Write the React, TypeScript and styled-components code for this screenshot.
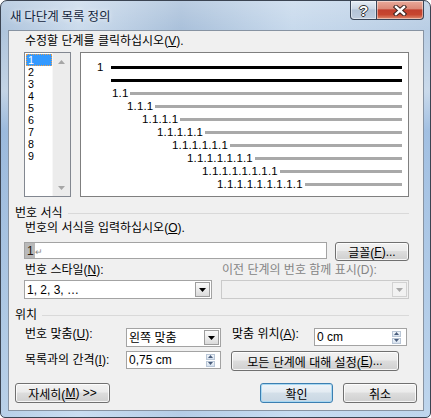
import React from 'react';
import styled, { createGlobalStyle } from 'styled-components';

const UI_FONT = `"Liberation Sans", "Noto Sans CJK KR", sans-serif`;

const GlobalStyle = createGlobalStyle`
  html, body {
    margin: 0;
    padding: 0;
    background: #fff;
  }
  body {
    font-family: ${UI_FONT};
    font-size: 12px;
    color: #000;
  }
`;

const Window = styled.div`
  box-sizing: border-box;
  width: 431px;
  height: 418px;
  border: 1px solid #3b4452;
  border-radius: 7px 7px 5px 5px;
  padding: 0 6px 6px 7px;
  display: flex;
  flex-direction: column;
  overflow: hidden;
  background:
    linear-gradient(180deg, rgba(255, 255, 255, 0.2) 0%, rgba(255, 255, 255, 0) 30px, rgba(255, 255, 255, 0.25) 90px, rgba(110, 160, 220, 0.3) 130px, rgba(200, 226, 250, 0.4) 100%),
    linear-gradient(90deg, #aec4dc 0%, #cbdbec 18%, #a9c0da 42%, #c7d9ec 68%, #b8cde4 100%);
`;

const TitleBar = styled.div`
  height: 29px;
  flex-shrink: 0;
  display: flex;
  align-items: center;
`;

const Title = styled.div`
  padding-left: 2px;
  font-family: "Noto Sans CJK KR", sans-serif;
  font-size: 12.5px;
  color: #14263d;
  text-shadow: 0 0 5px rgba(255, 255, 255, 0.9);
`;

const CaptionButtons = styled.div`
  margin-left: auto;
  align-self: flex-start;
  display: flex;
`;

const CaptionButton = styled.div<{ $close?: boolean }>`
  box-sizing: border-box;
  width: ${(p) => (p.$close ? 47 : 27)}px;
  height: 19px;
  border: 1px solid #3a4658;
  border-top: none;
  border-left-width: ${(p) => (p.$close ? 0 : 1)}px;
  border-radius: ${(p) => (p.$close ? '0 0 4px 0' : '0 0 0 4px')};
  background: ${(p) =>
    p.$close
      ? 'linear-gradient(#e9aa9a 0%, #dc8a78 42%, #c2402e 50%, #c7462f 75%, #df8a6e 100%)'
      : 'linear-gradient(#e6edf5 0%, #cbd7e5 42%, #b3c3d7 50%, #bfcddf 100%)'};
  box-shadow: inset 0 0 0 1px rgba(255, 255, 255, 0.45);
  display: flex;
  align-items: center;
  justify-content: center;
`;

const HelpGlyph = styled.span`
  font-family: "Liberation Sans", sans-serif;
  font-weight: 700;
  font-size: 15px;
  line-height: 15px;
  color: #fff;
  text-shadow: 1px 0 0 #333, -1px 0 0 #333, 0 1px 0 #333, 0 -1px 0 #333;
`;

const Client = styled.div`
  box-sizing: border-box;
  height: 381px;
  flex-shrink: 0;
  border: 1px solid #8793a2;
  background: #f0f0f0;
  padding: 3px 14px 0 15px;
  display: flex;
  flex-direction: column;
`;

const Label = styled.div<{ $disabled?: boolean; $dy?: number }>`
  height: 14px;
  line-height: 14px;
  padding-left: 1px;
  margin-top: ${(p) => p.$dy ?? 0}px;
  white-space: nowrap;
  color: ${(p) => (p.$disabled ? '#858585' : '#000')};
`;

const GroupHeader = styled.div`
  display: flex;
  align-items: center;
  height: 14px;
  line-height: 14px;
  margin: 9px 0 0 -9px;
  white-space: nowrap;

  &::after {
    content: '';
    flex: 1;
    height: 1px;
    margin-left: 5px;
    background: #d9d9d9;
  }
`;

const LevelRow = styled.div`
  display: flex;
  gap: 9px;
  height: 145px;
  margin-top: 4px;
`;

const LevelList = styled.div`
  box-sizing: border-box;
  width: 47px;
  border: 1px solid #828790;
  background: #fff;
  display: flex;
`;

const LevelItems = styled.div`
  flex: 1;
  padding: 1px 0 0 1px;
`;

const LevelItem = styled.div<{ $selected?: boolean }>`
  height: 12px;
  line-height: 12px;
  padding-left: 2px;
  font-family: "Liberation Sans", sans-serif;
  font-size: 10.7px;
  color: ${(p) => (p.$selected ? '#fff' : '#000')};
  background: ${(p) => (p.$selected ? '#3399ff' : 'transparent')};
  outline: ${(p) => (p.$selected ? '1px dotted #e8a050' : 'none')};
  outline-offset: -1px;
`;

const ScrollBar = styled.div`
  width: 17px;
  background: #ececec;
  border-left: 1px solid #f7f7f7;
  display: flex;
  flex-direction: column;
  justify-content: space-between;
`;

const ScrollArrow = styled.div`
  height: 17px;
  display: flex;
  align-items: center;
  justify-content: center;
`;

const Preview = styled.div`
  box-sizing: border-box;
  flex: 1;
  border: 1px solid #7f7f7f;
  background: #fff;
  padding: 8px 6px 0 0;
`;

const PreviewLine = styled.div<{ $indent: number }>`
  display: flex;
  align-items: center;
  height: 13px;
  padding-left: ${(p) => p.$indent}px;
`;

const PreviewNumber = styled.span<{ $w?: number }>`
  width: ${(p) => (p.$w ? `${p.$w}px` : 'auto')};
  margin-right: ${(p) => (p.$w ? 0 : 2)}px;
  font-family: "Liberation Sans", sans-serif;
  font-size: 11.5px;
  line-height: 13px;
  letter-spacing: 0.15px;
  white-space: nowrap;
`;

const Bar = styled.div<{ $strong?: boolean }>`
  flex: 1;
  height: 3px;
  background: ${(p) => (p.$strong ? '#000' : '#a9a9a9')};
`;

const FormatRow = styled.div`
  display: flex;
  align-items: flex-start;
  gap: 8px;
  margin-top: 7px;
  height: 19px;
`;

const TextBox = styled.div<{ $w?: number; $h?: number; $disabled?: boolean }>`
  box-sizing: border-box;
  flex: ${(p) => (p.$w ? 'none' : 1)};
  width: ${(p) => (p.$w ? `${p.$w}px` : 'auto')};
  height: ${(p) => p.$h ?? 18}px;
  border: 1px solid ${(p) => (p.$disabled ? '#cacaca' : '#a3a3a3')};
  background: ${(p) => (p.$disabled ? '#f0f0f0' : '#fff')};
  display: flex;
  align-items: center;
  padding-left: 2px;
  white-space: nowrap;
`;

const FieldText = styled.span`
  flex: 1;
  line-height: 14px;
`;

const FieldMark = styled.span`
  align-self: stretch;
  margin-left: -2px;
  padding: 0 1px 0 2px;
  background: #b9b9b9;
  color: #2b1a0c;
  display: flex;
  align-items: center;
`;

const ReturnMark = styled.span`
  font-size: 9px;
  color: #8a8a8a;
  margin-top: 3px;
`;

const DropButton = styled.div<{ $disabled?: boolean }>`
  box-sizing: border-box;
  width: 15px;
  height: 15px;
  margin-right: 1px;
  border: 1px solid ${(p) => (p.$disabled ? '#d2d2d2' : '#9d9d9d')};
  background: ${(p) =>
    p.$disabled ? '#f2f2f2' : 'linear-gradient(#fafafa 0%, #ececec 50%, #dadada 100%)'};
  display: flex;
  align-items: center;
  justify-content: center;
`;

const SpinButtons = styled.div`
  display: flex;
  flex-direction: column;
  gap: 1px;
  margin-right: 5px;
`;

const SpinHalf = styled.div`
  box-sizing: border-box;
  width: 9px;
  height: 6px;
  border: 1px solid #b9c6d6;
  background: linear-gradient(#f3f7fb, #d6e1ee);
  display: flex;
  align-items: center;
  justify-content: center;
`;

const StyleGrid = styled.div`
  display: grid;
  grid-template-columns: 188px 188px;
  column-gap: 9px;
  grid-template-rows: 14px 19px;
  row-gap: 3px;
  margin-top: 2px;
`;

const PositionGrid = styled.div`
  display: grid;
  grid-template-columns: 102px 105px 83px 93px;
  grid-template-rows: 19px 20px;
  row-gap: 4px;
  margin-top: 6px;
`;

const PushButton = styled.button<{ $w: number; $h?: number; $primary?: boolean }>`
  box-sizing: border-box;
  width: ${(p) => p.$w}px;
  height: ${(p) => p.$h ?? 20}px;
  margin: 0;
  padding: 0;
  border: 1px solid ${(p) => (p.$primary ? '#3c7fb1' : '#707070')};
  border-radius: 3px;
  background: ${(p) =>
    p.$primary
      ? 'linear-gradient(#eef4f9 0%, #e3ebf2 45%, #d3dfe9 50%, #c9d7e3 100%)'
      : 'linear-gradient(#f2f2f2 0%, #ebebeb 45%, #dddddd 50%, #cfcfcf 100%)'};
  box-shadow: inset 0 0 0 1px ${(p) => (p.$primary ? '#a8d8f2' : 'rgba(255, 255, 255, 0.8)')};
  font-family: ${UI_FONT};
  font-size: 12px;
  color: #000;
  display: flex;
  align-items: center;
  justify-content: center;
  white-space: nowrap;
`;

const WideButtonCell = styled.div`
  grid-column: 3 / 5;
`;

const Footer = styled.div`
  display: flex;
  gap: 10px;
  margin: 12px -8px 0 -9px;

  & > :first-child {
    margin-right: auto;
  }
`;

const TriangleDown = ({ color = '#000' }: { color?: string }) => (
  <svg width="7" height="4" viewBox="0 0 7 4">
    <path d="M0 0h7L3.5 4z" fill={color} />
  </svg>
);

const TriangleUp = ({ color = '#000' }: { color?: string }) => (
  <svg width="7" height="4" viewBox="0 0 7 4">
    <path d="M0 4h7L3.5 0z" fill={color} />
  </svg>
);

const CloseGlyph = () => (
  <svg width="14" height="11" viewBox="0 0 14 11">
    <path d="M3 2L11 9M11 2L3 9" stroke="#3b2420" strokeWidth="4.4" strokeLinecap="square" />
    <path d="M3 2L11 9M11 2L3 9" stroke="#fff" strokeWidth="2.4" strokeLinecap="square" />
  </svg>
);

const Spinner = ({ value, w }: { value: string; w: number }) => (
  <TextBox $w={w} $h={18}>
    <FieldText>{value}</FieldText>
    <SpinButtons>
      <SpinHalf>
        <svg width="5" height="3" viewBox="0 0 5 3">
          <path d="M0 3h5L2.5 0z" fill="#4a5d7c" />
        </svg>
      </SpinHalf>
      <SpinHalf>
        <svg width="5" height="3" viewBox="0 0 5 3">
          <path d="M0 0h5L2.5 3z" fill="#4a5d7c" />
        </svg>
      </SpinHalf>
    </SpinButtons>
  </TextBox>
);

const Select = ({ value, w, disabled }: { value?: string; w?: number; disabled?: boolean }) => (
  <TextBox $w={w} $h={19} $disabled={disabled}>
    <FieldText>{value}</FieldText>
    <DropButton $disabled={disabled}>
      <TriangleDown color={disabled ? '#a8a8a8' : '#000'} />
    </DropButton>
  </TextBox>
);

const levels = [1, 2, 3, 4, 5, 6, 7, 8, 9];

export default function App() {
  return (
    <>
      <GlobalStyle />
      <Window>
        <TitleBar>
          <Title>새 다단계 목록 정의</Title>
          <CaptionButtons>
            <CaptionButton>
              <HelpGlyph>?</HelpGlyph>
            </CaptionButton>
            <CaptionButton $close>
              <CloseGlyph />
            </CaptionButton>
          </CaptionButtons>
        </TitleBar>

        <Client>
          <Label>
            수정할 단계를 클릭하십시오(<u>V</u>).
          </Label>
          <LevelRow>
            <LevelList>
              <LevelItems>
                {levels.map((n) => (
                  <LevelItem key={n} $selected={n === 1}>
                    {n}
                  </LevelItem>
                ))}
              </LevelItems>
              <ScrollBar>
                <ScrollArrow>
                  <TriangleUp color="#a6a6a6" />
                </ScrollArrow>
                <ScrollArrow>
                  <TriangleDown color="#a6a6a6" />
                </ScrollArrow>
              </ScrollBar>
            </LevelList>
            <Preview>
              <PreviewLine $indent={16}>
                <PreviewNumber $w={14}>1</PreviewNumber>
                <Bar $strong />
              </PreviewLine>
              <PreviewLine $indent={30}>
                <Bar $strong />
              </PreviewLine>
              {levels.slice(1).map((n) => (
                <PreviewLine key={n} $indent={31 + 15 * (n - 2)}>
                  <PreviewNumber>{Array(n).fill('1').join('.')}</PreviewNumber>
                  <Bar />
                </PreviewLine>
              ))}
            </Preview>
          </LevelRow>

          <GroupHeader>번호 서식</GroupHeader>
          <Label $dy={1}>
            번호의 서식을 입력하십시오(<u>O</u>).
          </Label>
          <FormatRow>
            <TextBox $h={17}>
              <FieldMark>1</FieldMark>
              <ReturnMark>↵</ReturnMark>
            </TextBox>
            <PushButton $w={74} $h={19}>
              글꼴(<u>F</u>)...
            </PushButton>
          </FormatRow>
          <StyleGrid>
            <Label>
              번호 스타일(<u>N</u>):
            </Label>
            <Label $disabled>이전 단계의 번호 함께 표시(D):</Label>
            <Select value="1, 2, 3, …" />
            <Select disabled />
          </StyleGrid>

          <GroupHeader>위치</GroupHeader>
          <PositionGrid>
            <Label $dy={-1}>
              번호 맞춤(<u>U</u>):
            </Label>
            <Select value="왼쪽 맞춤" w={95} />
            <Label $dy={-1}>
              맞춤 위치(<u>A</u>):
            </Label>
            <Spinner value="0 cm" w={93} />
            <Label $dy={2}>
              목록과의 간격(<u>I</u>):
            </Label>
            <Spinner value="0,75 cm" w={95} />
            <WideButtonCell>
              <PushButton $w={168}>
                모든 단계에 대해 설정(<u>E</u>)...
              </PushButton>
            </WideButtonCell>
          </PositionGrid>

          <Footer>
            <PushButton $w={95}>
              자세히(<u>M</u>) &gt;&gt;
            </PushButton>
            <PushButton $w={73} $primary>
              확인
            </PushButton>
            <PushButton $w={74}>취소</PushButton>
          </Footer>
        </Client>
      </Window>
    </>
  );
}
